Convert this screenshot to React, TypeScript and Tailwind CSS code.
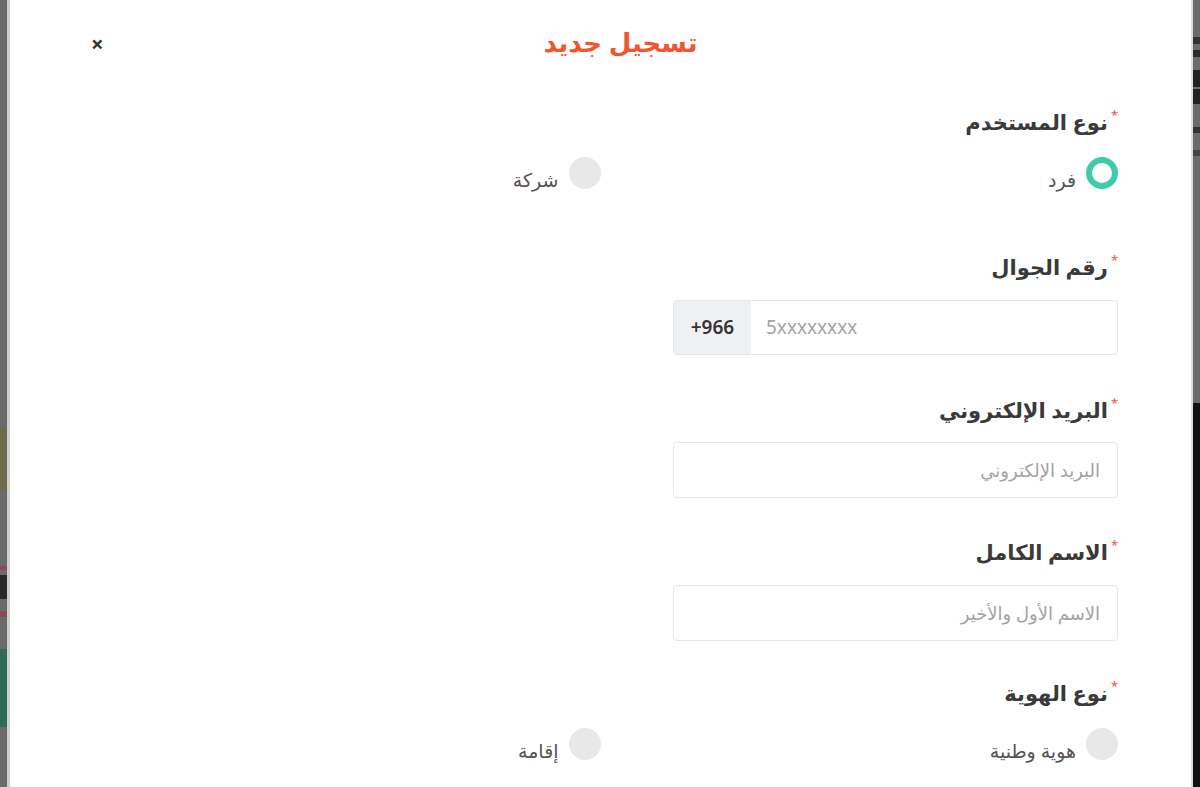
import React from "react";

function Req() {
  return <span className="text-[#f26b5b] text-[13px] leading-none self-start mt-[1px] ml-[3px]">*</span>;
}

function Label({ children }: { children: React.ReactNode }) {
  return (
    <div className="flex items-center h-[30px] text-[21px] font-semibold text-[#3a3a3a]">
      <Req />
      <span>{children}</span>
    </div>
  );
}

function Radio({ label, checked }: { label: string; checked?: boolean }) {
  return (
    <div className="flex items-center gap-[10px]">
      {checked ? (
        <span className="w-[32px] h-[32px] rounded-full border-[6px] border-[#3fcaa9] bg-white" />
      ) : (
        <span className="w-[32px] h-[32px] rounded-full bg-[#e8e8e8]" />
      )}
      <span className="text-[19px] text-[#555] mt-[14px]">{label}</span>
    </div>
  );
}

function TextInput({ placeholder }: { placeholder: string }) {
  return (
    <div className="w-[445px] h-[56px] border border-[#e4e7eb] rounded-[4px] flex items-center px-[17px]">
      <input
        dir="rtl"
        placeholder={placeholder}
        className="w-full outline-none bg-transparent text-[18px] text-[#333] placeholder:text-[#a3a3a3]"
      />
    </div>
  );
}

export default function App() {
  return (
    <div className="w-[1200px] h-[787px] flex bg-[#6b6b6b] font-['Noto_Sans','DejaVu_Sans',sans-serif] overflow-hidden">
      {/* left background strip */}
      <div className="w-[7px] flex flex-col">
        <div className="h-[428px]" />
        <div className="h-[62px] bg-[#6f6a4c]" />
        <div className="h-[76px]" />
        <div className="h-[4px] bg-[#8a4a55]" />
        <div className="h-[5px]" />
        <div className="h-[24px] bg-[#2a2a2a]" />
        <div className="h-[12px]" />
        <div className="h-[6px] bg-[#8a4a55]" />
        <div className="h-[32px]" />
        <div className="h-[78px] bg-[#2f6a58]" />
      </div>
      <div className="w-[3px] bg-[#cfcfcf]" />

      {/* modal */}
      <div className="flex-1 bg-white" dir="rtl">
        <div className="flex items-center px-[73px] pt-[25px] h-[60px]">
          <div className="flex-1" />
          <h1 className="text-[26px] font-bold text-[#f0562f] pl-[32px]">تسجيل جديد</h1>
          <div className="flex-1 flex justify-end pl-[8px]">
            <span className="text-[22px] font-bold text-[#333] leading-none">×</span>
          </div>
        </div>

        <div className="px-[73px] pt-[48px] flex flex-col">
          <Label>نوع المستخدم</Label>
          <div className="grid grid-cols-2 mt-[14px] h-[32px]">
            <Radio label="فرد" checked />
            <Radio label="شركة" />
          </div>

          <div className="mt-[69px]">
            <Label>رقم الجوال</Label>
            <div dir="ltr" className="mt-[17px] ml-auto w-[445px] h-[55px] border border-[#e4e7eb] rounded-[4px] flex overflow-hidden">
              <div className="w-[77px] bg-[#eff0f3] flex items-center justify-center text-[19px] font-semibold text-[#333]">+966</div>
              <input
                placeholder="5xxxxxxxx"
                className="flex-1 px-[15px] outline-none text-[19px] placeholder:text-[#a3a3a3]"
              />
            </div>
          </div>

          <div className="mt-[41px] flex flex-col">
            <Label>البريد الإلكتروني</Label>
            <div className="mt-[16px]">
              <TextInput placeholder="البريد الإلكتروني" />
            </div>
          </div>

          <div className="mt-[40px] flex flex-col">
            <Label>الاسم الكامل</Label>
            <div className="mt-[17px]">
              <TextInput placeholder="الاسم الأول والأخير" />
            </div>
          </div>

          <div className="mt-[38px]">
            <Label>نوع الهوية</Label>
            <div className="grid grid-cols-2 mt-[14px] h-[32px]">
              <Radio label="هوية وطنية" />
              <Radio label="إقامة" />
            </div>
          </div>
        </div>
      </div>

      {/* right background strip */}
      <div className="w-[2px] bg-[#dcdcdc]" />
      <div className="w-[7px] flex flex-col">
        <div className="h-[37px]" />
        <div className="h-[7px] bg-[#333]" />
        <div className="h-[6px]" />
        <div className="h-[7px] bg-[#2a2a2a]" />
        <div className="h-[13px]" />
        <div className="h-[17px] bg-[#222]" />
        <div className="h-[2px]" />
        <div className="h-[15px] bg-[#222]" />
        <div className="h-[23px]" />
        <div className="h-[6px] bg-[#333]" />
        <div className="h-[17px]" />
        <div className="h-[6px] bg-[#444]" />
        <div className="h-[247px]" />
        <div className="flex-1 bg-[#111]" />
      </div>
    </div>
  );
}
